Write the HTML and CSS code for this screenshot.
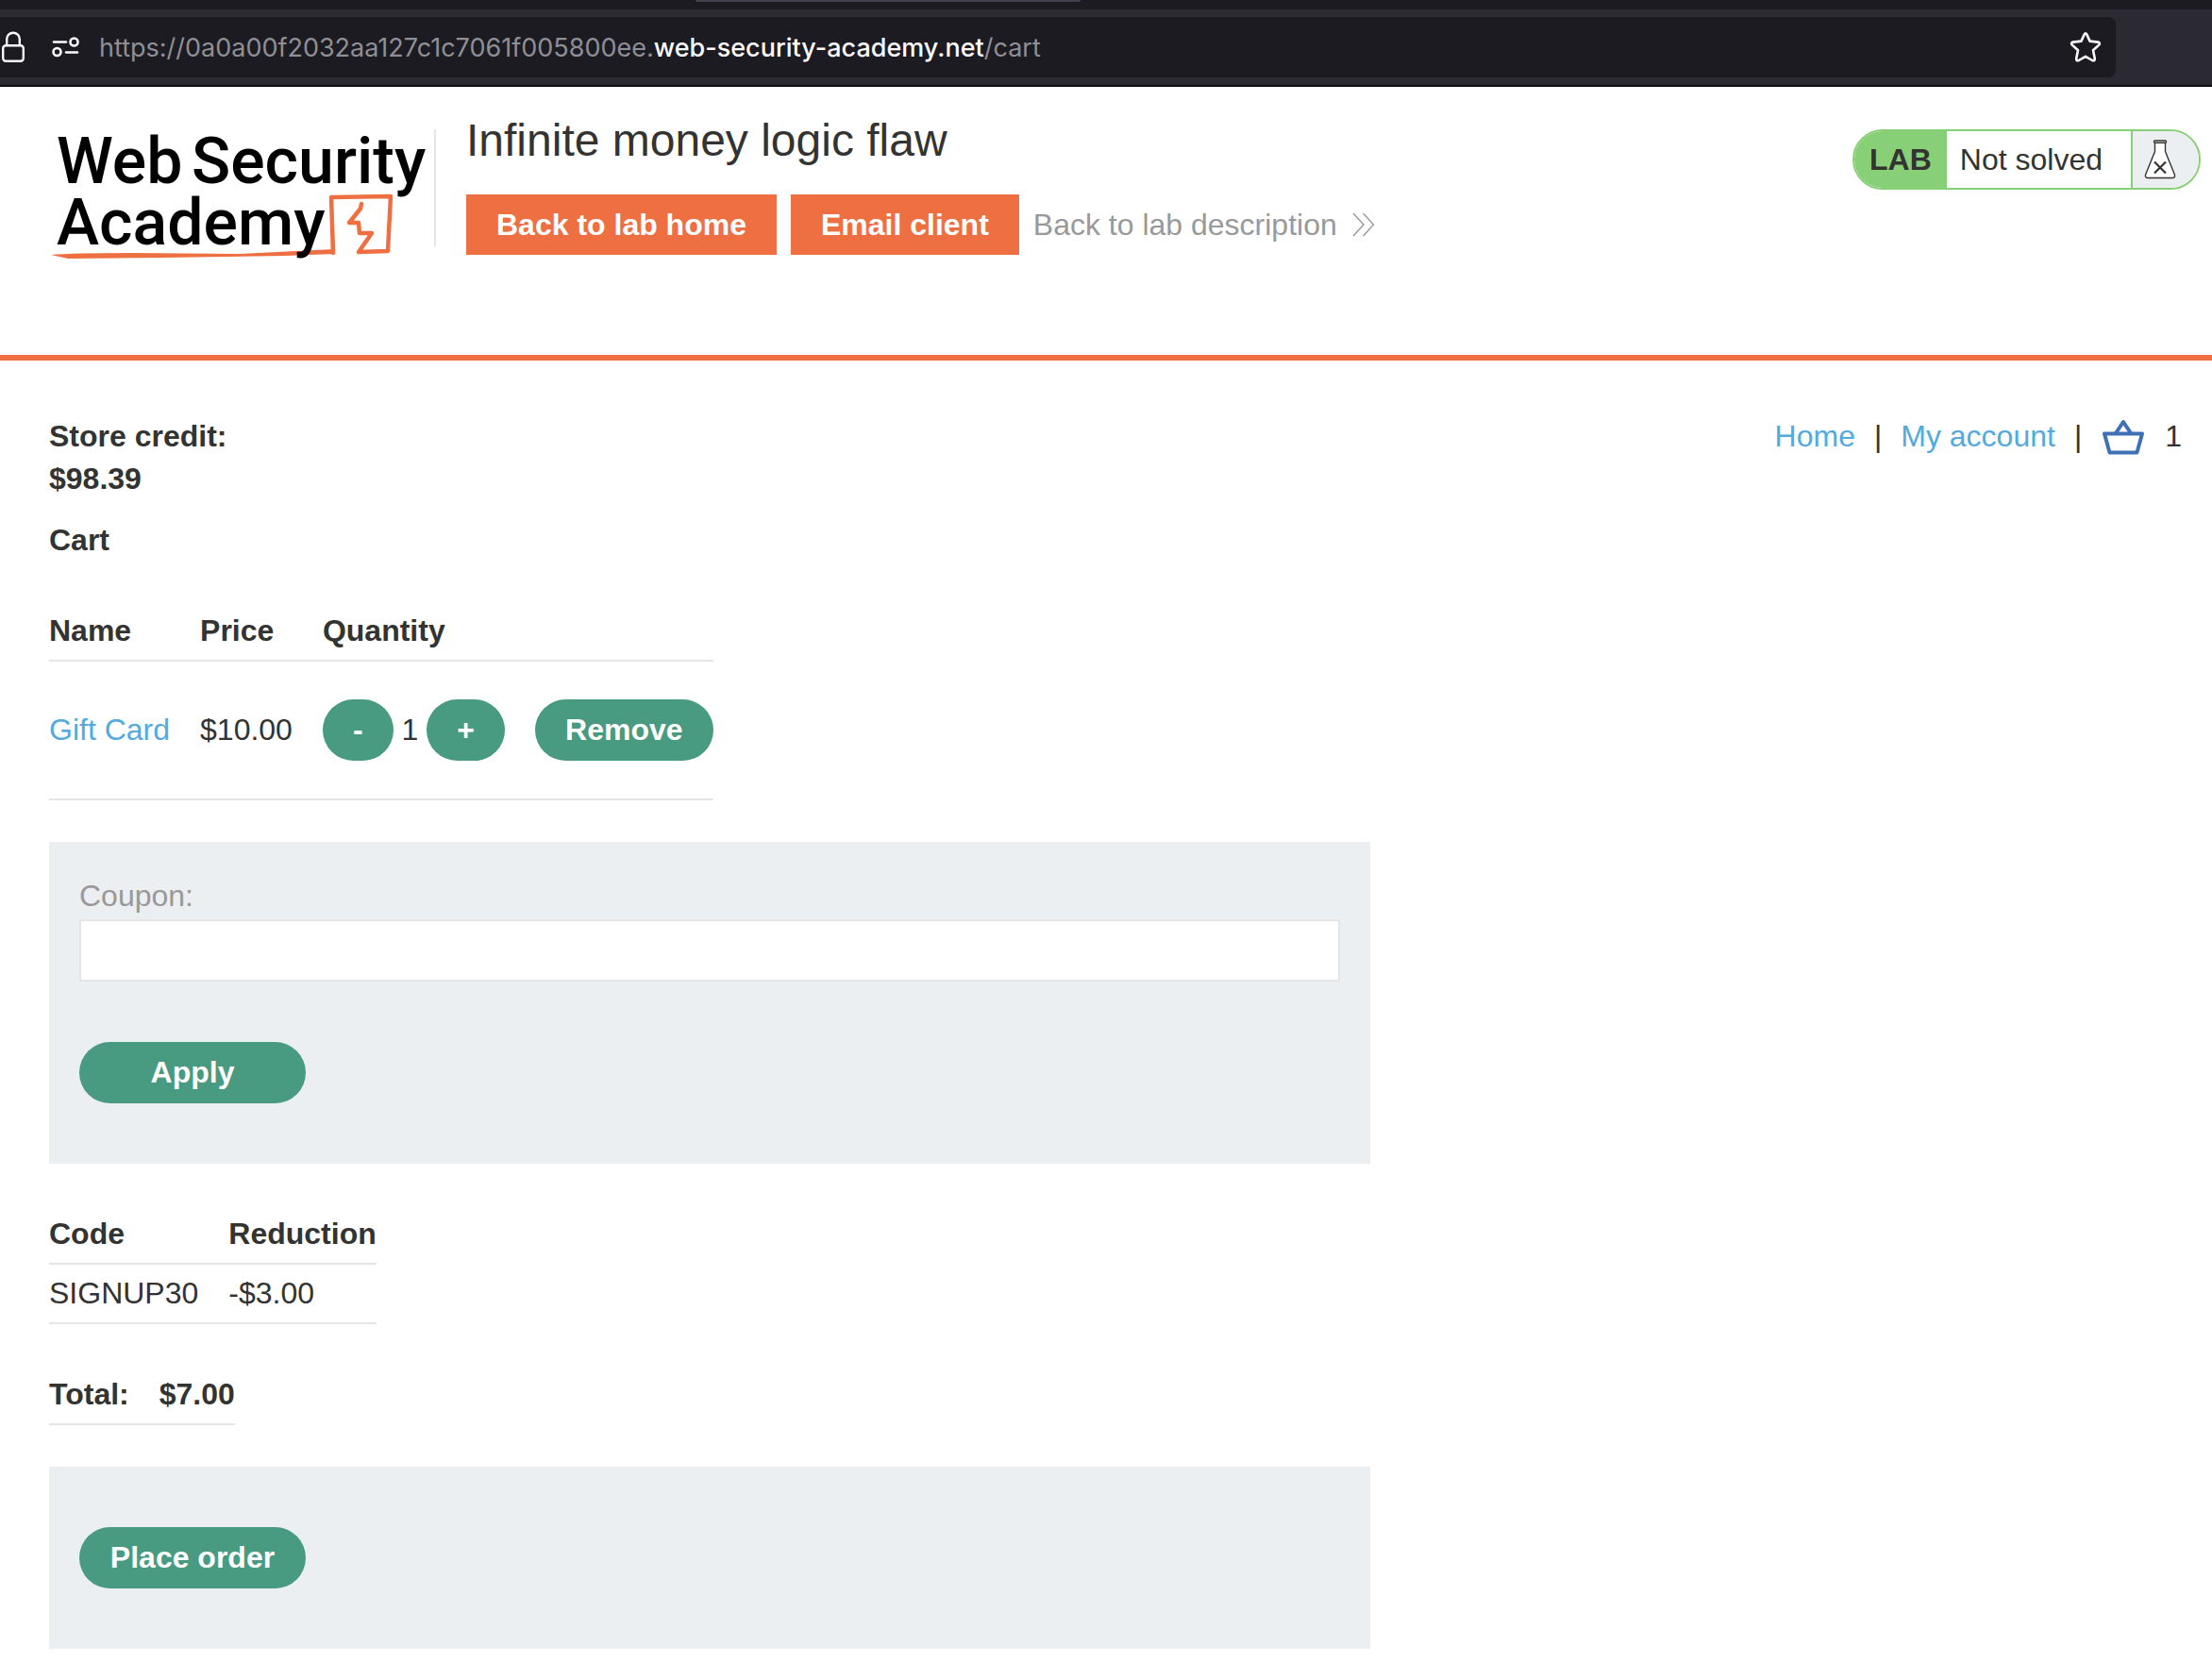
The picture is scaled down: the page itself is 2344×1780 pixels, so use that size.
FILE: index.html
```html
<!DOCTYPE html>
<html lang="en">
<head>
<meta charset="utf-8">
<title>Infinite money logic flaw</title>
<link rel="stylesheet" href="styles.css">
</head>
<body>
<div class="browser">
  <div class="tabstrip"><div class="tab"></div></div>
  <div class="toolbar">
    <div class="urlbar">
      <svg class="lock" width="28" height="36" viewBox="0 0 28 36" fill="none" stroke="#fbfbfe" stroke-width="2.4"><rect x="3.2" y="16.2" width="21.6" height="16.6" rx="3"/><path d="M7.2 16V9.5a6.8 6.8 0 0 1 13.6 0V16"/></svg>
      <svg class="permissions" width="30" height="22" viewBox="0 0 30 22" fill="none" stroke="#fbfbfe" stroke-width="2.6" stroke-linecap="round"><path d="M2 5.500h13M15 16.500h12"/><circle cx="23.500" cy="5.500" r="4"/><circle cx="5.500" cy="16" r="4"/></svg>
      <div class="url">https://0a0a00f2032aa127c1c7061f005800ee.<span class="domain">web-security-academy.net</span>/cart</div>
      <svg class="star" width="34" height="34" viewBox="0 0 34 34" fill="none" stroke="#fbfbfe" stroke-width="2.6" stroke-linejoin="round"><path d="M15.600 3.600Q17 1.200 18.400 3.600L21.600 10.600L30.200 11.600Q33 12.200 31.200 14.600L25 20.200L26.800 29Q27 32 24.200 31L17 26.800L9.800 31Q7 32 7.200 29L9 20.200L2.800 14.600Q1 12.200 3.800 11.600L12.400 10.600Z"/></svg>
    </div>
  </div>
</div>

<header class="lab-header">
  <a class="logo" href="#" aria-label="Web Security Academy">
    <svg width="408" height="146" viewBox="0 0 408 146">
      <path d="M2 133Q22 131 90 131L200 132L302 127V132L250 134L120 136L20 137Z" fill="#ee7042"/>
      <path d="M301 131L299 72L362 71L359 129L328 130L342 110H329L328 99H318L330 84L331 79" fill="none" stroke="#ee7042" stroke-width="4.500" stroke-linejoin="round" stroke-linecap="round"/>
      <g class="logo-text">
        <text x="8" y="57">Web</text><text x="151" y="57">Security</text>
        <text x="8" y="122">Academy</text>
      </g>
    </svg>
  </a>
  <div class="title-area">
    <h1>Infinite money logic flaw</h1>
    <div class="actions">
      <a class="lab-button" href="#">Back to lab home</a>
      <a class="lab-button" href="#">Email client</a>
      <a class="back-link" href="#">Back to lab description
        <svg width="24" height="26" viewBox="0 0 24 26" fill="none" stroke="#999" stroke-width="1.400"><path d="M1 1L12 13L1 25M11.500 1L22.500 13L11.500 25"/></svg></a>
    </div>
  </div>
  <div class="status">
    <span class="status-tag">LAB</span>
    <span class="status-text">Not solved</span>
    <span class="status-icon">
      <svg width="34" height="42" viewBox="0 0 34 42" fill="#fff" stroke="#333332" stroke-width="1.400" stroke-linejoin="round"><path d="M11.500 2.500V12.500L1.600 37Q.8 40.500 4 40.500H30Q33.200 40.500 32.400 37L22.500 12.500V2.500Z"/><rect x="10.500" y="1" width="13" height="2.200" rx="1"/><path d="M11 23.500L23 35.500M23 23.500L11 35.500" stroke-width="2.200"/></svg>
    </span>
  </div>
</header>

<main class="page">
  <div class="top">
    <p class="credit"><strong>Store credit:<br>$98.39</strong></p>
    <nav class="nav">
      <a href="#">Home</a><span>|</span><a href="#">My account</a><span>|</span>
      <a class="basket" href="#" aria-label="Basket"><svg width="44" height="40" viewBox="0 0 44 40" fill="none" stroke="#3f70b5" stroke-width="4" stroke-linejoin="round"><path d="M2 16.500H42L36.500 36.500H7.500Z"/><path d="M14 16L22 4L30 16"/></svg></a>
      <span>1</span>
    </nav>
  </div>

  <h2>Cart</h2>
  <table>
    <thead><tr><th>Name</th><th>Price</th><th>Quantity</th><th></th></tr></thead>
    <tbody>
      <tr class="item">
        <td><a href="#">Gift Card</a></td>
        <td>$10.00</td>
        <td><div class="quantity"><button class="button" type="button">-</button><span>1</span><button class="button" type="button">+</button></div></td>
        <td><button class="button" type="button">Remove</button></td>
      </tr>
    </tbody>
  </table>

  <form class="panel coupon-form">
    <label for="coupon">Coupon:</label>
    <input id="coupon" type="text" name="coupon">
    <button class="button wide" type="button">Apply</button>
  </form>

  <table>
    <thead><tr><th>Code</th><th>Reduction</th></tr></thead>
    <tbody><tr><td>SIGNUP30</td><td>-$3.00</td></tr></tbody>
  </table>

  <table>
    <tbody><tr><th>Total:</th><th>$7.00</th></tr></tbody>
  </table>

  <form class="panel order-form">
    <button class="button wide" type="button">Place order</button>
  </form>
</main>
</body>
</html>
```
FILE: styles.css
```css
* { box-sizing: border-box; }

body {
  margin: 0;
  background: #fff;
  color: #333332;
  font: 32px/45px "Liberation Sans", Arial, sans-serif;
}

h1, h2, p { margin: 0; }
a { color: #54a9dd; text-decoration: none; }
svg { display: block; flex: none; }

/* Browser chrome */
.browser { border-bottom: 2px solid #0c0c0d; background: #2b2a33; }
.tabstrip { height: 10px; background: #1c1b22; }
.tab {
  width: 408px;
  height: 2px;
  margin-left: 737px;
  background: #42414d;
  border-radius: 0 0 4px 4px;
}
.toolbar { padding: 8px 102px 8px 0; }
.urlbar {
  display: flex;
  align-items: center;
  height: 64px;
  padding-right: 15px;
  background: #1c1b22;
  border-radius: 0 8px 8px 0;
}
.permissions { margin-left: 27px; }
.url {
  flex: 1;
  margin-left: 20px;
  padding-top: 2px;
  color: #8f8f96;
  font: 27px/40px Inter, "Liberation Sans", sans-serif;
  white-space: nowrap;
}
.domain { color: #fbfbfe; font-weight: 500; }

/* Lab header */
.lab-header {
  display: flex;
  align-items: flex-start;
  min-height: 290px;
  padding: 32px 12px 0 52px;
  border-bottom: 6px solid #ee7042;
}
.logo {
  height: 124px;
  margin-top: 13px;
  border-right: 2px solid #e5e5e5;
}
.logo svg { overflow: visible; }
.logo-text { fill: #000; font: 500 68px Roboto, "Liberation Sans", sans-serif; }
.title-area { flex: 1; margin-left: 32px; }
h1 { font-size: 48px; font-weight: 400; line-height: 50px; }
.actions { display: flex; gap: 15px; margin-top: 32px; }
.lab-button {
  padding: 0 32px;
  background: #ee7042;
  color: #fff;
  font-weight: 700;
  line-height: 64px;
}
.back-link {
  display: flex;
  align-items: center;
  gap: 16px;
  color: #999;
  line-height: 64px;
}
.status {
  display: flex;
  height: 64px;
  margin-top: 13px;
  overflow: hidden;
  border: 2px solid #88d077;
  border-radius: 32px;
  line-height: 60px;
}
.status-tag {
  padding: 0 16px;
  background: #88d077;
  font-weight: 700;
}
.status-text { padding: 0 30px 0 14px; }
.status-icon {
  display: flex;
  align-items: center;
  padding: 0 24px 0 12px;
  border-left: 2px solid #88d077;
  background: #ebeff2;
}

/* Cart page */
.page { padding: 58px 32px 32px 52px; }
.top { display: flex; justify-content: space-between; align-items: flex-start; }
.nav { display: flex; gap: 20px; }
.basket { padding: 3px 2px 0; }
h2 { margin-top: 20px; font-size: 32px; }

table { margin-top: 44px; border-collapse: separate; border-spacing: 0; }
h2 + table { margin-top: 43px; }
th, td {
  padding: 8px 32px 8px 0;
  border-bottom: 2px solid #e5e5e5;
  text-align: left;
}
th:last-child, td:last-child { padding-right: 0; }
.item td { padding-top: 40px; padding-bottom: 40px; }
.quantity { display: flex; align-items: center; gap: 9px; }

.button {
  display: block;
  height: 65px;
  padding: 0 32px;
  border: 0;
  border-radius: 33px;
  background: #489a81;
  color: #fff;
  font: 700 32px/45px "Liberation Sans", Arial, sans-serif;
}
.wide { width: 240px; }

.panel {
  max-width: 1400px;
  margin-top: 44px;
  padding: 64px 32px;
  background: #ebeff2;
}
.coupon-form { padding-top: 32px; }
label { display: block; color: #999; line-height: 50px; }
input {
  display: block;
  width: 100%;
  height: 66px;
  margin-bottom: 64px;
  padding: 0 16px;
  border: 2px solid #e5e5e5;
  background: #fff;
  font: 32px/45px "Liberation Sans", Arial, sans-serif;
}
.order-form .wide { padding: 0; }
```
